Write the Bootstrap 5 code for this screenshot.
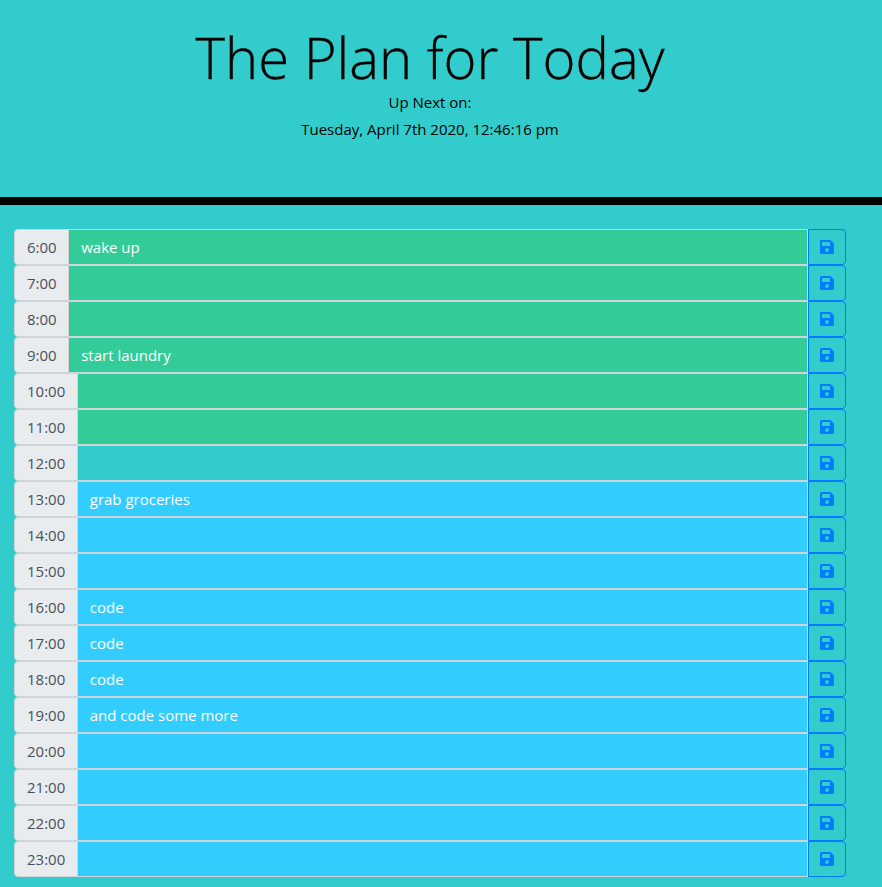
<!DOCTYPE html>
<html lang="en">
<head>
<meta charset="utf-8">
<title>The Plan for Today</title>
<link href="https://cdn.jsdelivr.net/npm/bootstrap@5.3.0/dist/css/bootstrap.min.css" rel="stylesheet">
<style>
html, body { background: #33cccc; }
body { font-family: "Open Sans", sans-serif; font-size: 16px; color: #000; overflow: hidden; }
.hero-band { height: 205px; border-bottom: 8px solid #000; padding: 24px 22px 0 0; text-align: center; }
.hero-band h1 { font-family: "Open Sans", sans-serif; font-size: 56.2px; font-weight: 300; -webkit-text-stroke: 0.3px #000; line-height: 1.2; margin: 0; }
.hero-band p { font-size: 15px; line-height: 22px; margin: 0 0 5px; }
.planner { padding: 24px 36px 10px 14px; }
.slot { height: 36px; flex-wrap: nowrap; }
.slot .input-group-text { font-family: "Open Sans", sans-serif; font-size: 15px; padding: 1px 11.5px 0 12px; color: #495057; background: #e9ecef; border-color: #ced4da; border-radius: 4px 0 0 4px; line-height: 1; }
.slot .form-control { height: 36px; padding: 0 12px; background: transparent; color: #fff; font-size: 15px; line-height: 34px; border-color: #ced4da; border-radius: 0; }
.slot .save-btn { width: 38px; height: 36px; flex: none; padding: 0; margin-left: 0 !important; background: transparent; border: 1px solid #007bff; border-radius: 0 4px 4px 0; color: #007bff; display: flex; align-items: center; justify-content: center; }
.slot .save-btn svg { width: 14px; height: 16px; fill: currentColor; }
.tone-past { background: #33cc99 !important; }
.tone-present { background: #33cccc !important; }
.tone-future { background: #33ccff !important; }
</style>
</head>
<body>
<header class="hero-band">
  <h1>The Plan for Today</h1>
  <p>Up Next on:</p>
  <p>Tuesday, April 7th 2020, 12:46:16 pm</p>
</header>
<main class="planner" id="planner"></main>
<script>
var items = {6:"wake up",9:"start laundry",13:"grab groceries",16:"code",17:"code",18:"code",19:"and code some more"};
var icon = '<svg viewBox="0 0 448 512" aria-hidden="true"><path d="M433.941 129.941l-83.882-83.882A48 48 0 0 0 316.118 32H48C21.49 32 0 53.49 0 80v352c0 26.51 21.49 48 48 48h352c26.51 0 48-21.49 48-48V163.882a48 48 0 0 0-14.059-33.941zM224 416c-35.346 0-64-28.654-64-64 0-35.346 28.654-64 64-64s64 28.654 64 64c0 35.346-28.654 64-64 64zm96-304.52V212c0 6.627-5.373 12-12 12H76c-6.627 0-12-5.373-12-12V108c0-6.627 5.373-12 12-12h228.52c3.183 0 6.235 1.264 8.485 3.515l3.48 3.48A11.996 11.996 0 0 1 320 111.48z"/></svg>';
var html = "";
for (var h = 6; h <= 23; h++) {
  var tone = h < 12 ? "tone-past" : (h === 12 ? "tone-present" : "tone-future");
  html += '<div class="input-group slot"><span class="input-group-text">' + h + ':00</span><div class="form-control ' + tone + '">' + (items[h] || "") + '</div><button class="btn save-btn" type="button" aria-label="Save">' + icon + '</button></div>';
}
document.getElementById("planner").innerHTML = html;
</script>
<script src="https://cdn.jsdelivr.net/npm/bootstrap@5.3.0/dist/js/bootstrap.bundle.min.js"></script>
</body>
</html>
